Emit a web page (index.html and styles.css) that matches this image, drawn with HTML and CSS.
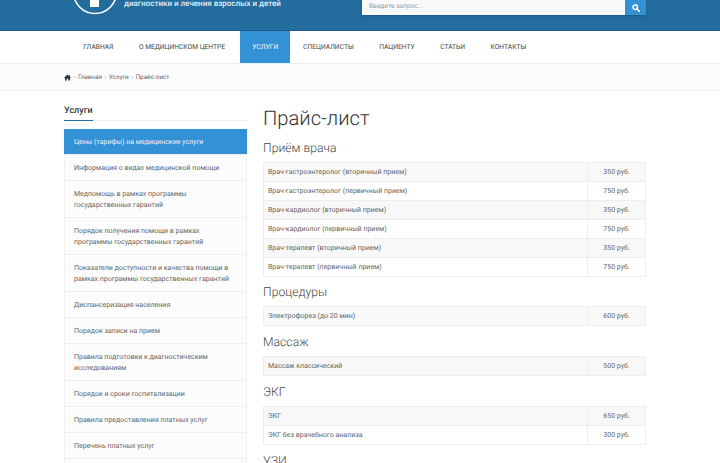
FILE: index.html
```html
<!DOCTYPE html>
<html lang="ru">
<head>
    <meta charset="UTF-8">
    <meta name="viewport" content="width=device-width, initial-scale=1.0">
    <title>Прайс-лист</title>
    <link rel="stylesheet" href="styles.css">
</head>
<body>
    <header class="top-bar">
        <div class="container top-inner">
            <div class="brand">
                <svg class="logo" width="46" height="46" viewBox="0 0 46 46">
                    <circle cx="23" cy="23" r="21.5" fill="none" stroke="#fff" stroke-width="1.6"/>
                    <rect x="18" y="4" width="9" height="34" fill="#fff"/>
                </svg>
                <span class="slogan">диагностики и лечения взрослых и детей</span>
            </div>
            <form class="search">
                <span class="search-input">Введите запрос...</span>
                <span class="search-btn">
                    <svg width="8" height="8" viewBox="0 0 16 16">
                        <circle cx="6.5" cy="6.5" r="4.5" fill="none" stroke="#fff" stroke-width="3"/>
                        <path d="M10 10l4.5 4.5" stroke="#fff" stroke-width="3.4" stroke-linecap="round"/>
                    </svg>
                </span>
            </form>
        </div>
    </header>

    <nav class="main-nav">
        <ul class="container nav-list">
            <li><a href="#">Главная</a></li>
            <li><a href="#">О медицинском центре</a></li>
            <li class="active"><a href="#">Услуги</a></li>
            <li><a href="#">Специалисты</a></li>
            <li><a href="#">Пациенту</a></li>
            <li><a href="#">Статьи</a></li>
            <li><a href="#">Контакты</a></li>
        </ul>
    </nav>

    <div class="crumbs">
        <div class="container crumbs-inner">
            <svg width="7" height="7" viewBox="0 0 14 14"><path d="M7 1L0 7.5l1 1L2 7.6V13h3.6V9h2.8v4H12V7.6l1 .9 1-1-2.5-2.3V2h-2v2.3z" fill="#333"/></svg>
            <span class="sep">›</span><a href="#">Главная</a>
            <span class="sep">›</span><a href="#">Услуги</a>
            <span class="sep">›</span><a href="#">Прайс-лист</a>
        </div>
    </div>

    <div class="container page">
        <aside class="sidebar">
            <div class="side-title"><span>Услуги</span></div>
            <ul class="side-menu">
                <li class="active"><a href="#">Цены (тарифы) на медицинские услуги</a></li>
                <li><a href="#">Информация о видах медицинской помощи</a></li>
                <li><a href="#">Медпомощь в рамках программы государственных гарантий</a></li>
                <li><a href="#">Порядок получения помощи в рамках программы государственных гарантий</a></li>
                <li><a href="#">Показатели доступности и качества помощи в рамках программы государственных гарантий</a></li>
                <li><a href="#">Диспансеризация населения</a></li>
                <li><a href="#">Порядок записи на прием</a></li>
                <li><a href="#">Правила подготовки к диагностическим исследованиям</a></li>
                <li><a href="#">Порядок и сроки госпитализации</a></li>
                <li><a href="#">Правила предоставления платных услуг</a></li>
                <li><a href="#">Перечень платных услуг</a></li>
                <li><a href="#">&nbsp;</a></li>
            </ul>
        </aside>

        <main class="content">
            <h1>Прайс-лист</h1>

            <h2>Приём врача</h2>
            <table class="price-table">
                <tr><td>Врач-гастроэнтеролог (вторичный прием)</td><td class="price">350 руб.</td></tr>
                <tr><td>Врач-гастроэнтеролог (первичный прием)</td><td class="price">750 руб.</td></tr>
                <tr><td>Врач-кардиолог (вторичный прием)</td><td class="price">350 руб.</td></tr>
                <tr><td>Врач-кардиолог (первичный прием)</td><td class="price">750 руб.</td></tr>
                <tr><td>Врач-терапевт (вторичный прием)</td><td class="price">350 руб.</td></tr>
                <tr><td>Врач-терапевт (первичный прием)</td><td class="price">750 руб.</td></tr>
            </table>

            <h2>Процедуры</h2>
            <table class="price-table">
                <tr><td>Электрофорез (до 20 мин)</td><td class="price">600 руб.</td></tr>
            </table>

            <h2>Массаж</h2>
            <table class="price-table">
                <tr><td>Массаж классический</td><td class="price">500 руб.</td></tr>
            </table>

            <h2>ЭКГ</h2>
            <table class="price-table">
                <tr><td>ЭКГ</td><td class="price">650 руб.</td></tr>
                <tr><td>ЭКГ без врачебного анализа</td><td class="price">300 руб.</td></tr>
            </table>

            <h2>УЗИ</h2>
        </main>
    </div>
</body>
</html>
```

FILE: styles.css
```css
html, body {
    height: 463px;
    overflow: hidden;
}
body {
    margin: 0;
    font-family: Roboto, Arial, sans-serif;
    font-size: 8px;
    color: #444;
    background-color: #fff;
    text-rendering: geometricPrecision;
}
a {
    color: inherit;
    text-decoration: none;
}
ul {
    list-style: none;
    margin: 0;
    padding: 0;
}
.container {
    width: 582px;
    margin-left: 64px;
}

/* header */
.top-bar {
    height: 30px;
    background-color: #236c9e;
    border-bottom: 1px solid #1c5a85;
}
.top-inner {
    display: flex;
    justify-content: space-between;
    height: 30px;
}
.brand {
    display: flex;
    align-items: flex-start;
    color: #e4eef5;
    font-size: 8px;
    font-weight: 500;
}
.logo {
    margin: -31px 0 0 8px;
}
.slogan {
    margin: -2px 0 0 6px;
    line-height: 11px;
}
.search {
    display: flex;
    width: 284px;
    height: 15px;
    box-shadow: 0 1px 2px rgba(0, 0, 0, 0.2);
}
.search-input {
    flex: 1;
    padding-left: 7px;
    line-height: 13px;
    font-size: 6.6px;
    color: #999;
    background-color: #fafafa;
}
.search-btn {
    display: flex;
    align-items: center;
    justify-content: center;
    width: 21px;
    background-color: #3391d6;
}

/* nav */
.main-nav {
    height: 32px;
    border-bottom: 1px solid #eee;
}
.nav-list {
    display: flex;
    padding-left: 6.5px;
    box-sizing: border-box;
}
.nav-list li a {
    display: block;
    padding: 0 12.75px;
    line-height: 32px;
    height: 32px;
    font-size: 6.7px;
    white-space: nowrap;
    text-transform: uppercase;
    color: #444;
}
.nav-list .active {
    margin-left: 2.5px;
}
.nav-list .active a {
    width: 50px;
    padding: 0;
    text-align: center;
    color: #fff;
    background-color: #3391d6;
}

/* breadcrumbs */
.crumbs {
    height: 26px;
    background-color: #fcfcfc;
    border-bottom: 1px solid #f0f0f0;
}
.crumbs-inner {
    display: flex;
    align-items: center;
    gap: 2.5px;
    height: 26px;
    font-size: 6.3px;
    color: #666;
}
.crumbs .sep {
    color: #aaa;
}

/* page */
.page {
    display: flex;
    gap: 16px;
    padding-top: 13px;
}
.sidebar {
    width: 183px;
    flex-shrink: 0;
}
.side-title {
    height: 16px;
    border-bottom: 1px solid #f0f0f0;
    margin-bottom: 8px;
}
.side-title span {
    display: inline-block;
    height: 16px;
    font-size: 9px;
    font-weight: 500;
    line-height: 14px;
    color: #333;
    border-bottom: 1px solid #236c9e;
}
.side-menu {
    border: 1px solid #f0f0f0;
    border-top: 0;
}
.side-menu li {
    padding: 8px 9px 6px;
    line-height: 11px;
    font-size: 7px;
    color: #666;
    background-color: #fcfcfc;
    border-bottom: 1px solid #eee;
}
.side-menu .active {
    margin: 0 -1px;
    padding: 8px 9px 6px 10px;
    color: #e8f3fb;
    background-color: #3391d6;
}
.content {
    flex: 1;
    min-width: 0;
}
h1 {
    margin: 0;
    font-family: Roboto, Arial, sans-serif;
    font-size: 20.2px;
    font-weight: 300;
    line-height: 29px;
    color: #333;
}
h2 {
    margin: 6px 0 5px;
    font-family: Roboto, Arial, sans-serif;
    font-size: 12.2px;
    font-weight: 300;
    line-height: 18px;
    color: #444;
}
.price-table {
    width: 100%;
    border-collapse: collapse;
    margin-bottom: 7px;
    font-size: 7px;
    color: #666;
}
h1 + h2 + .price-table {
    margin-bottom: 6px;
}
.price-table td {
    height: 18px;
    padding: 0 4px;
    border: 1px solid #eee;
}
.price-table tr:nth-child(odd) td {
    background-color: #f8f8f8;
}
.price-table .price {
    width: 57px;
    padding: 0;
    text-align: center;
}
```
